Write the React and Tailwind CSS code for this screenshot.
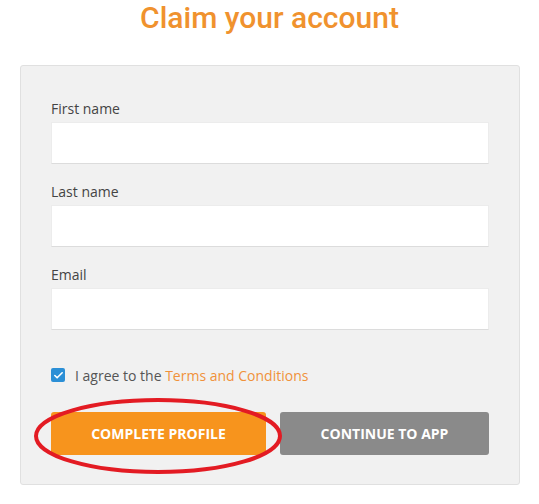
import { Check } from "lucide-react";

const SANS = "font-['Open_Sans',sans-serif]";

function Field({ label, first }) {
  return (
    <div className={first ? "" : "mt-[17px]"}>
      <div className={`${SANS} text-[14px] leading-[20px] text-[#444] pt-[1px]`}>{label}</div>
      <div className="mt-[3px] h-[42px] bg-white border border-[#ececec] border-b-[#dcdcdc]" />
    </div>
  );
}

export default function App() {
  return (
    <div className="w-[539px] h-[504px] bg-white">
      <h1 className="text-center font-['Roboto',sans-serif] font-medium text-[30px] leading-[35px] text-[#f0922e]">
        Claim your account
      </h1>

      {/* Form panel */}
      <div className="mt-[30px] ml-[20px] w-[500px] bg-[#f1f1f1] border border-[#e0e0e0] rounded-[3px] pt-[32px] px-[30px] pb-[29px]">
        <Field label="First name" first />
        <Field label="Last name" />
        <Field label="Email" />

        <div className="mt-[35px] flex items-center h-[20px]">
          <span className="w-[14px] h-[14px] rounded-[2px] bg-[#2b8fd6] flex items-center justify-center">
            <Check className="w-[11px] h-[11px] text-white" strokeWidth={3.5} />
          </span>
          <span className={`${SANS} ml-[10px] text-[14px] text-[#555]`}>
            I agree to the <span className="text-[#f0913a]">Terms and Conditions</span>
          </span>
        </div>

        <div className="relative mt-[27px] flex gap-[14px]">
          <button className={`${SANS} w-[215px] h-[43px] rounded-[3px] bg-[#f7941d] text-white font-bold text-[14px]`}>
            COMPLETE PROFILE
          </button>
          <button className={`${SANS} w-[209px] h-[43px] rounded-[3px] bg-[#8a8a8a] text-white font-bold text-[14px]`}>
            CONTINUE TO APP
          </button>
          {/* red highlight ring */}
          <svg className="absolute left-[-17px] top-[-14px] pointer-events-none" width="248" height="76" viewBox="0 0 248 76">
            <ellipse cx="124" cy="38" rx="122" ry="36" fill="none" stroke="#e31b23" strokeWidth="4" />
          </svg>
        </div>
      </div>
    </div>
  );
}
